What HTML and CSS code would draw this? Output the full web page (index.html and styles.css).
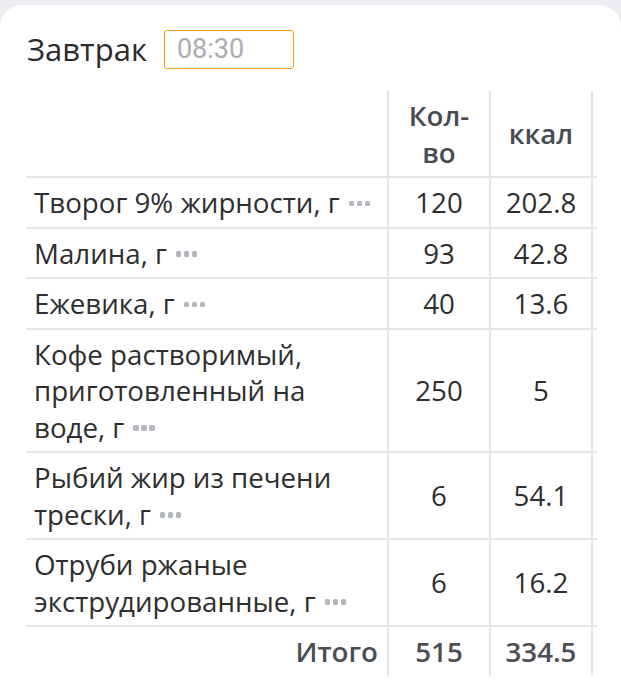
FILE: index.html
```html
<!DOCTYPE html>
<html lang="ru">
<head>
<meta charset="utf-8">
<link rel="stylesheet" href="styles.css">
</head>
<body>
<div class="card">
  <div class="meal-head">
    <span class="meal-title">Завтрак</span>
    <div class="time-input">08:30</div>
  </div>
  <div class="table-wrap">
    <table class="food-table">
      <colgroup>
        <col class="c-name"><col class="c-num"><col class="c-num"><col class="c-extra">
      </colgroup>
      <thead>
        <tr>
          <th class="name"></th>
          <th>Кол-<br>во</th>
          <th>ккал</th>
          <th></th>
        </tr>
      </thead>
      <tbody>
        <tr>
          <td class="name">Творог 9% жирности, г<span class="more"><i></i><i></i><i></i></span></td>
          <td>120</td><td>202.8</td><td></td>
        </tr>
        <tr>
          <td class="name">Малина, г<span class="more"><i></i><i></i><i></i></span></td>
          <td>93</td><td>42.8</td><td></td>
        </tr>
        <tr>
          <td class="name">Ежевика, г<span class="more"><i></i><i></i><i></i></span></td>
          <td>40</td><td>13.6</td><td></td>
        </tr>
        <tr>
          <td class="name">Кофе растворимый, приготовленный на воде, г<span class="more"><i></i><i></i><i></i></span></td>
          <td>250</td><td>5</td><td></td>
        </tr>
        <tr>
          <td class="name">Рыбий жир из печени трески, г<span class="more"><i></i><i></i><i></i></span></td>
          <td>6</td><td>54.1</td><td></td>
        </tr>
        <tr>
          <td class="name">Отруби ржаные экструдированные, г<span class="more"><i></i><i></i><i></i></span></td>
          <td>6</td><td>16.2</td><td></td>
        </tr>
        <tr class="total">
          <td class="name">Итого</td>
          <td>515</td><td>334.5</td><td></td>
        </tr>
      </tbody>
    </table>
  </div>
</div>
</body>
</html>
```

FILE: styles.css
```css
html, body {
  margin: 0;
  padding: 0;
  background: #eceef1;
}
body {
  font-family: "Open Sans", "Noto Sans", sans-serif;
  color: #2e2e2e;
  overflow: hidden;
}
.card {
  margin-top: 5px;
  background: #ffffff;
  border-radius: 22px 22px 0 0;
  padding: 25px 0 20px 26px;
  min-height: 700px;
  box-sizing: border-box;
}
.meal-head {
  display: flex;
  align-items: center;
  gap: 17px;
  height: 39px;
}
.meal-title {
  font-size: 31px;
  line-height: 39px;
  color: #2b2b2b;
  padding-left: 1px;
}
.time-input {
  box-sizing: border-box;
  width: 130px;
  height: 39px;
  border: 1.5px solid #efa21a;
  border-radius: 3px;
  padding-left: 12px;
  font-family: Roboto, "Liberation Sans", sans-serif;
  font-size: 27px;
  line-height: 36px;
  color: #a9adb2;
}
.table-wrap {
  margin-top: 22px;
  width: 571px;
  overflow: hidden;
}
.food-table {
  border-collapse: collapse;
  table-layout: fixed;
  width: 666px;
  font-size: 27.7px;
  line-height: 36.5px;
}
.c-name { width: 362px; }
.c-num { width: 102px; }
.c-extra { width: 100px; }
.food-table th,
.food-table td {
  padding: 6px 8px 6px 8px;
  border-bottom: 2px solid #e2e5e9;
  border-left: 2px solid #e2e5e9;
  text-align: center;
  vertical-align: middle;
}
.food-table th {
  font-weight: 600;
  color: #474c52;
}
.food-table .name {
  border-left: none;
  text-align: left;
}
.food-table tr.total td {
  border-bottom: none;
  font-weight: 600;
  color: #4a4f55;
}
.food-table tr.total td.name {
  text-align: right;
  padding-right: 9px;
}
.more {
  display: inline-flex;
  gap: 2.5px;
  margin-left: 9px;
  vertical-align: middle;
  position: relative;
  top: -2px;
}
.more i {
  display: block;
  width: 5.5px;
  height: 5.5px;
  border-radius: 1.5px;
  background: #b3b8be;
}
```
